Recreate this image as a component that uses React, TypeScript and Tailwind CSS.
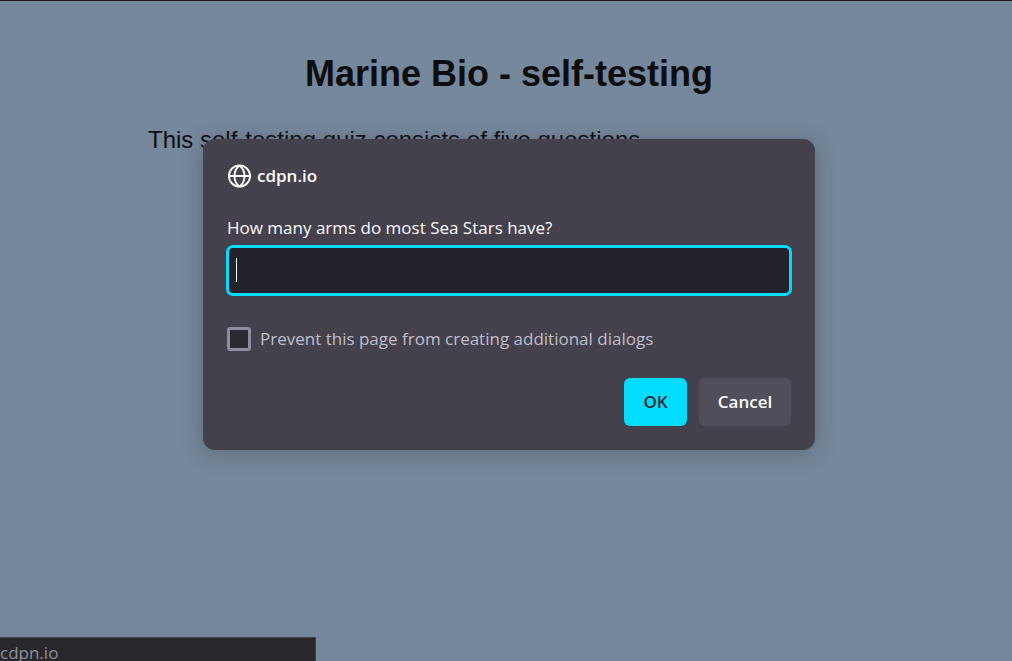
export default function App() {
  return (
    <div className="relative min-h-screen overflow-hidden border-t border-[#1c1b22] bg-[#75889c] pl-1.5 font-['Liberation_Sans',sans-serif] text-[#0d0d0f]">
      <main className="mx-auto w-full max-w-[722px] pt-12">
        <h1 className="text-center text-4xl leading-[50px] font-bold">Marine Bio - self-testing</h1>
        <p className="mt-[25px] text-2xl leading-8">This self-testing quiz consists of five questions.</p>
      </main>

      <div className="absolute inset-x-0 top-[138px] flex justify-center pr-4 pl-[22px]">
        <form
          role="dialog"
          aria-label="cdpn.io"
          className="w-full max-w-[612px] rounded-xl bg-[#44414d] px-6 pt-[25px] pb-6 font-['Open_Sans',sans-serif] text-[17px] leading-6 text-[#fbfbfe] shadow-[0_3px_21px_rgba(58,57,68,0.4)]"
          onSubmit={(event) => event.preventDefault()}
        >
          <header className="flex items-center gap-1.5 font-semibold">
            <svg aria-hidden="true" viewBox="0 0 24 24" className="size-6" fill="none" stroke="currentColor" strokeWidth="1.9">
              <circle cx="12.5" cy="12" r="10.6" />
              <path d="M12.5 1.4C5.8 6.5 5.8 17.5 12.5 22.6M12.5 1.4C19.2 6.5 19.2 17.5 12.5 22.6M2 12h21" />
            </svg>
            <span>cdpn.io</span>
          </header>
          <label htmlFor="answer" className="mt-7 block">How many arms do most Sea Stars have?</label>
          <div className="relative mt-1.5">
            <input id="answer" type="text" autoFocus className="block h-[49px] w-full rounded-md border-2 border-[#00ddff] bg-[#23222b] px-2 caret-transparent ring-1 ring-[#00ddff] outline-none" />
            <span aria-hidden="true" className="pointer-events-none absolute top-3 left-[9px] h-6 w-px bg-[#fbfbfe]" />
          </div>
          <div className="mt-8 flex items-center gap-[9px] text-[#bfbfc9]">
            <input id="prevent" type="checkbox" className="size-6 shrink-0 appearance-none rounded-[3px] border-3 border-[#8f8d9d] bg-[#2b2a33]" />
            <label htmlFor="prevent">Prevent this page from creating additional dialogs</label>
          </div>
          <div className="mt-[27px] flex justify-end gap-3 font-semibold">
            <button type="submit" className="h-12 w-[63px] rounded-md bg-[#00ddff] text-[#2b2a33]">OK</button>
            <button type="button" className="h-12 w-[92px] rounded-md bg-[#504e5a]">Cancel</button>
          </div>
        </form>
      </div>
      <div className="absolute bottom-0 left-0 h-6 w-[316px] overflow-hidden border-t border-r border-[#42414d] bg-[#28272c] pt-[3px] font-['Open_Sans',sans-serif] text-[17px] leading-6 text-[#8f8f9d]">cdpn.io</div>
    </div>
  );
}
